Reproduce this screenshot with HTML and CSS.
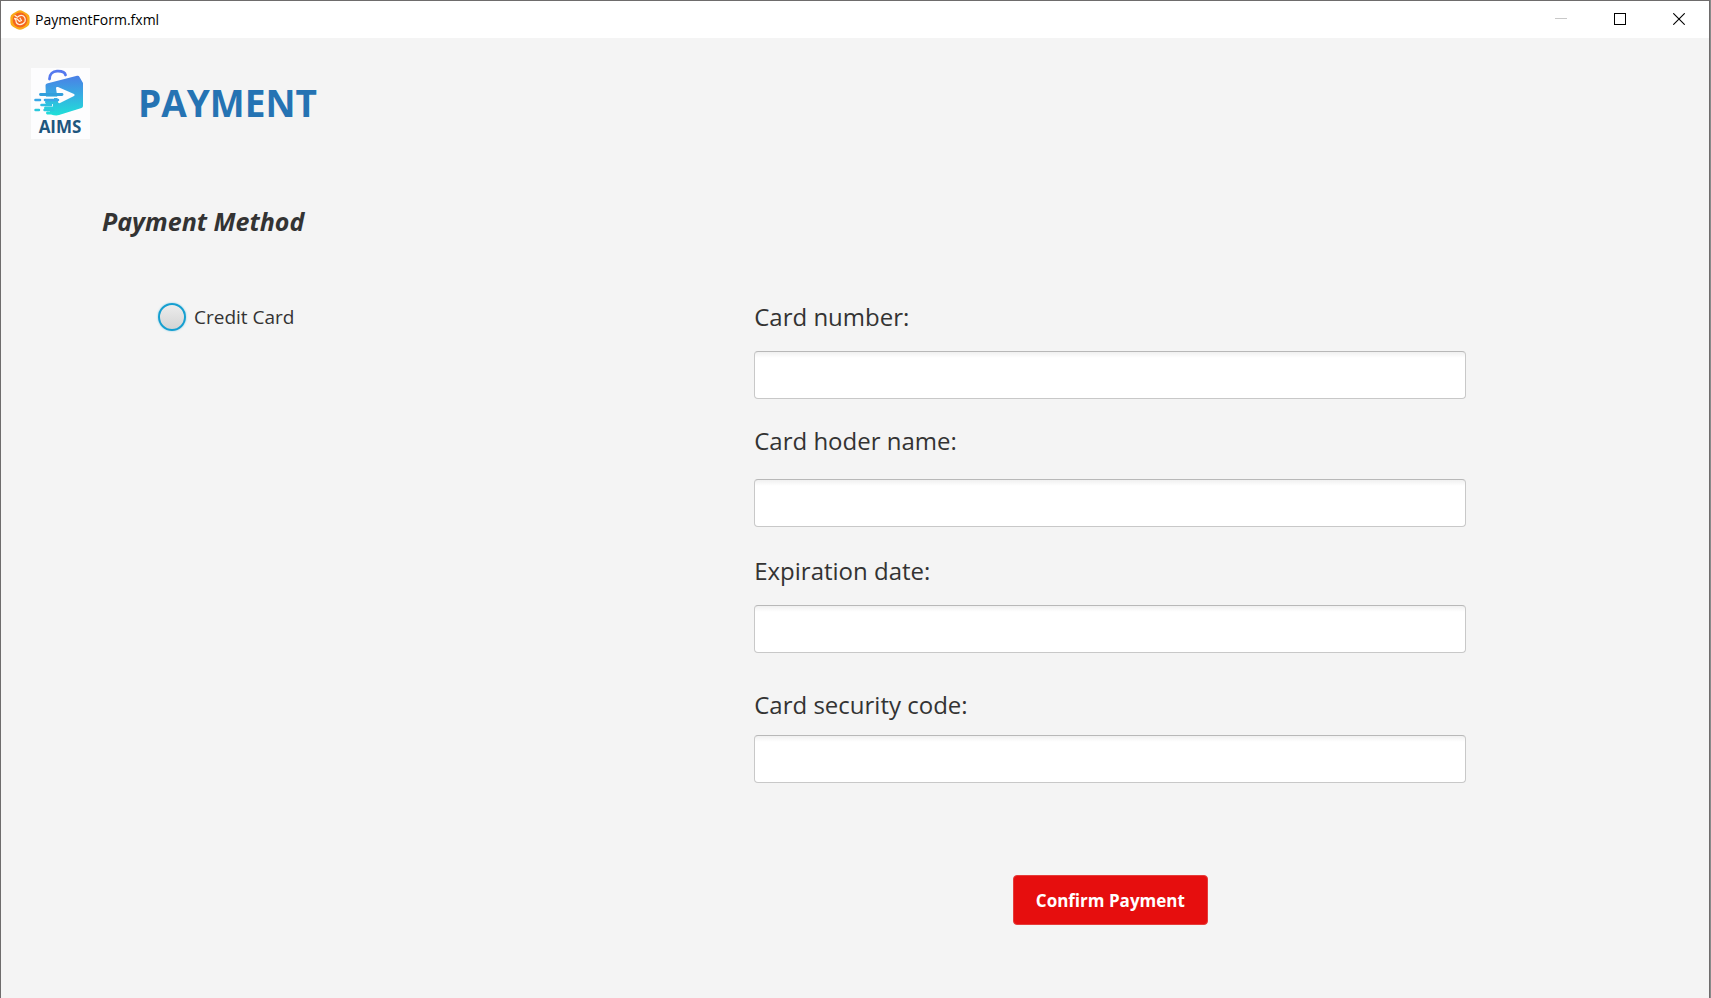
FILE: index.html
```html
<!DOCTYPE html>
<html lang="en">
<head>
<meta charset="utf-8">
<title>PaymentForm.fxml</title>
<link rel="stylesheet" href="styles.css">
</head>
<body>
<div class="window">
  <div class="titlebar">
    <svg class="app-icon" viewBox="0 0 20 20" aria-hidden="true">
      <path d="M7 1.2Q10-.8 13 1.2L17 3.500Q20 5 19.600 8.500V12Q19.800 15 17 16.800L13 19Q10 20.600 7 19L3 16.800Q.2 15 .4 12V8.500Q0 5 3 3.500Z" fill="#fbab18"/>
      <circle cx="10" cy="10" r="7.400" fill="#f4661f"/>
      <path d="M4.600 5.200L7.500 7.200Q10 4.500 13 5.800Q16 8 15 11.500Q13 15 9 14.500Q5.800 13.500 6 10.500L4.600 8.400L7.400 9.200L9.500 11.500L11.500 10.500L9.800 7.700" fill="none" stroke="#fff0dc" stroke-width="1.200" stroke-linejoin="round"/>
    </svg>
    <span class="window-name">PaymentForm.fxml</span>
    <div class="window-controls">
      <button class="window-button" type="button" aria-label="Minimize" disabled><svg viewBox="0 0 12 12" aria-hidden="true"><path d="M0 5.500H12" stroke="#c8c8c8"/></svg></button>
      <button class="window-button" type="button" aria-label="Maximize"><svg viewBox="0 0 12 12" aria-hidden="true"><rect x=".5" y=".5" width="11" height="11" fill="none" stroke="#000"/></svg></button>
      <button class="window-button" type="button" aria-label="Close"><svg viewBox="0 0 12 12" aria-hidden="true"><path d="M.3.3L11.700 11.700M11.700.3L.3 11.700" stroke="#000" stroke-width="1.100"/></svg></button>
    </div>
  </div>
  <main class="content">
    <header class="header">
      <svg class="logo" viewBox="0 0 59 71" role="img" aria-label="AIMS">
        <defs>
          <linearGradient id="bag" x1="0" y1="0" x2="0" y2="1"><stop offset="0" stop-color="#4b7fe6"/><stop offset=".5" stop-color="#36aee2"/><stop offset="1" stop-color="#1fe0d8"/></linearGradient>
        </defs>
        <rect width="59" height="71" fill="#fdfdfe"/>
        <path d="M18.500 11C18.500 6 22 3.500 26 3.200C31 3 34 4.500 34.500 7" fill="none" stroke="#5478ee" stroke-width="2.800" stroke-linecap="round"/>
        <path d="M14.500 17.500Q14.500 16 16 15.500L46 7.800Q48 7.500 48.500 9L52 15V38Q52 39.500 50.500 40L28 47Q25 48 20 46.500H16Q14 45 16 43.500H19V41.500H14Q12 40 14 38.500H22V36H15Q13 34 15 32.500H23V30H15Z" fill="url(#bag)"/>
        <path d="M25 20Q25 18.500 27 19L43 26Q44.500 27 43 28L29 35Q27 35.500 27 34Z" fill="#fdfdfe"/>
        <path d="M9.500 26.500H31" stroke="#329fdc" stroke-width="2.800" stroke-linecap="round"/>
        <path d="M8 29.300H27" stroke="#fdfdfe" stroke-width="1.400"/>
        <path d="M4.500 32H9M14 32H27" stroke="#38a8e6" stroke-width="2.600" stroke-linecap="round"/>
        <path d="M10.500 37H20" stroke="#2fbfe2" stroke-width="2.600" stroke-linecap="round"/>
        <path d="M4.500 42H8M13.500 42H22" stroke="#2cc8dc" stroke-width="2.400" stroke-linecap="round"/>
        <text class="logo-text" x="29" y="65" text-anchor="middle">AIMS</text>
      </svg>
      <h1 class="title">PAYMENT</h1>
    </header>
    <h2 class="subtitle">Payment Method</h2>
    <form class="payment">
      <label class="method"><input class="radio" type="radio" name="method">Credit Card</label>
      <div class="card-form">
        <label class="label label-roomy" for="number">Card number:</label>
        <input class="field" id="number" type="text">
        <label class="label label-wide" for="holder">Card hoder name:</label>
        <input class="field" id="holder" type="text">
        <label class="label label-roomy" for="expiry">Expiration date:</label>
        <input class="field" id="expiry" type="text">
        <label class="label" for="code">Card security code:</label>
        <input class="field" id="code" type="text">
        <button class="confirm" type="button">Confirm Payment</button>
      </div>
    </form>
  </main>
</div>
</body>
</html>
```
FILE: styles.css
```css
* {
  box-sizing: border-box;
}

body {
  margin: 0;
  background: #8a8a8a;
  color: #333;
  font-family: "Open Sans", "Noto Sans", sans-serif;
}

.window {
  display: flex;
  flex-direction: column;
  min-height: 100vh;
  margin-right: 1px;
  border: 1px solid #6e6c6c;
  border-bottom: 0;
  background: #f4f4f4;
}

.titlebar {
  display: flex;
  align-items: center;
  height: 37px;
  padding-left: 9px;
  background: #fff;
}

.app-icon {
  width: 20px;
  height: 20px;
}

.window-name {
  margin-left: 5px;
  color: #000;
  font-size: 14px;
}

.window-controls {
  display: flex;
  align-self: flex-start;
  margin-left: auto;
  padding-right: 1px;
}

.window-button {
  display: grid;
  place-items: center;
  width: 59px;
  height: 36px;
  padding: 0;
  border: 0;
  background: none;
}

.window-button svg {
  width: 12px;
  height: 12px;
}

.content {
  padding: 30px 0;
}

.header {
  display: flex;
  align-items: center;
  gap: 48px;
  padding-left: 30px;
}

.logo {
  width: 59px;
  height: 71px;
}

.logo-text {
  fill: #1f567e;
  font-size: 17px;
  font-weight: 700;
}

.title {
  margin: 0;
  padding-bottom: 2px;
  color: #2573b3;
  font-size: 37px;
  line-height: 48px;
}

.subtitle {
  margin: 62px 0 0 101px;
  font-size: 25px;
  font-style: italic;
  line-height: 40px;
}

.payment {
  display: grid;
  grid-template-columns: 441fr 417fr 142fr;
  align-items: start;
  margin-top: 58px;
}

.method {
  display: flex;
  align-items: center;
  gap: 8px;
  margin-left: 157px;
  font-size: 19px;
  line-height: 36px;
}

.radio {
  width: 28px;
  height: 28px;
  margin: 0;
  appearance: none;
  border: 2px solid #159fd0;
  border-radius: 50%;
  background: linear-gradient(#ececec, #d4d4d4);
  box-shadow: 0 0 2px #7cc8e4;
}

.card-form {
  display: grid;
  grid-template-rows: 52px 48px 80px 48px 78px 48px 82px 48px auto;
}

.label {
  align-self: end;
  padding-bottom: 12px;
  font-size: 24px;
  line-height: 36px;
}

.label-roomy {
  padding-bottom: 16px;
}

.label-wide {
  padding-bottom: 20px;
}

.field {
  width: 100%;
  padding: 0 16px;
  border: 1px solid #c8c8c8;
  border-top-color: #b8b8b8;
  border-radius: 4px;
  background: linear-gradient(#f0f0f0, #fff 6px);
  color: inherit;
  font: inherit;
  font-size: 24px;
}

.confirm {
  justify-self: center;
  height: 50px;
  margin-top: 92px;
  padding: 0 22px;
  border: 1px solid #e63c3a;
  border-radius: 4px;
  background: #e60e0e;
  color: #fff;
  font: inherit;
  font-size: 17px;
  font-weight: 700;
}
```
